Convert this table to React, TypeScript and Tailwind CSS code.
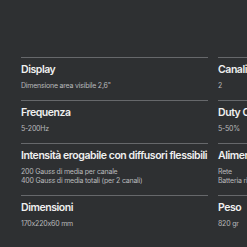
import React from 'react';

const specs = [
  { title: 'Display', lines: ['Dimensione area visibile 2,6"'] },
  { title: 'Canali', lines: ['2'] },
  { title: 'Frequenza', lines: ['5-200Hz'] },
  { title: 'Duty Cycle', lines: ['5-50%'] },
  { title: 'Intensità erogabile con diffusori flessibili', lines: ['200 Gauss di media per canale', '400 Gauss di media totali (per 2 canali)'] },
  { title: 'Alimentazione', lines: ['Rete', 'Batteria ricaricabile'] },
  { title: 'Dimensioni', lines: ['170x220x60 mm'] },
  { title: 'Peso', lines: ['820 gr'] },
];

export default function App() {
  return (
    <div className="w-[247px] h-[247px] overflow-hidden bg-[#2e3032] font-['Inter',sans-serif]">
      <div className="pt-[57px] pl-[21px]">
        <div className="grid grid-cols-[187px_187px] gap-x-[10px] w-[384px]">
          {specs.map((s, i) => (
            <div key={i} className="border-t border-[#66686b] pt-[5px] pb-[10px]">
              <h3 className="text-[10.5px] leading-[14px] font-semibold tracking-[-0.042em] text-[#f0f0f0] whitespace-nowrap">
                {s.title}
              </h3>
              <div className="mt-[4px]">
                {s.lines.map((l, j) => (
                  <p key={j} className="text-[7px] leading-[9px] tracking-[-0.03em] text-[#b9babc] whitespace-nowrap">
                    {l}
                  </p>
                ))}
              </div>
            </div>
          ))}
        </div>
      </div>
    </div>
  );
}
